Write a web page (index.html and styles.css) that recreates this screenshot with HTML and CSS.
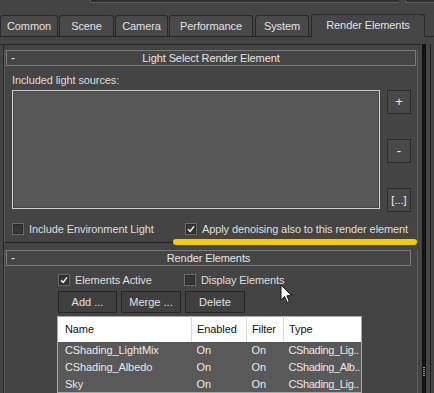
FILE: index.html
```html
<!DOCTYPE html>
<html lang="en">
<head>
  <meta charset="UTF-8">
  <title>Render Setup - Render Elements</title>
  <link rel="stylesheet" href="styles.css">
</head>
<body>
  <div class="topbar">
    <div class="topbox wide"></div>
    <div class="topbox"></div>
  </div>

  <div class="tabs">
    <div class="tab">Common</div>
    <div class="tab">Scene</div>
    <div class="tab">Camera</div>
    <div class="tab">Performance</div>
    <div class="tab">System</div>
    <div class="tab active">Render Elements</div>
  </div>

  <div class="main">
    <div class="panel">
      <div class="rollout first">
        <div class="rollout-head">
          <span class="minus">-</span>
          <span class="title">Light Select Render Element</span>
        </div>
        <div class="rollout-body">
          <div class="caption">Included light sources:</div>
          <div class="lights">
            <div class="light-list"></div>
            <div class="side-buttons">
              <button class="side-btn">+</button>
              <button class="side-btn">-</button>
              <button class="side-btn small">[...]</button>
            </div>
          </div>
          <div class="check-row">
            <label class="check"><span class="box"></span>Include Environment Light</label>
            <label class="check"><span class="box checked"><svg viewBox="0 0 12 12"><path d="M2.5 6.2 L5 8.8 L9.6 2.8" /></svg></span>Apply denoising also to this render element</label>
          </div>
        </div>
      </div>

      <div class="rollout second">
        <div class="rollout-head">
          <span class="minus">-</span>
          <span class="title">Render Elements</span>
        </div>
        <div class="rollout-body">
          <div class="check-row">
            <label class="check"><span class="box checked"><svg viewBox="0 0 12 12"><path d="M2.5 6.2 L5 8.8 L9.6 2.8" /></svg></span>Elements Active</label>
            <label class="check"><span class="box"></span>Display Elements</label>
          </div>
          <div class="actions">
            <button class="btn">Add ...</button>
            <button class="btn">Merge ...</button>
            <button class="btn">Delete</button>
          </div>
          <table class="elements">
            <thead>
              <tr>
                <th class="c-name">Name</th>
                <th class="c-enabled">Enabled</th>
                <th class="c-filter">Filter</th>
                <th class="c-type">Type</th>
              </tr>
            </thead>
            <tbody>
              <tr><td>CShading_LightMix</td><td>On</td><td>On</td><td>CShading_Lig..</td></tr>
              <tr><td>CShading_Albedo</td><td>On</td><td>On</td><td>CShading_Alb..</td></tr>
              <tr><td>Sky</td><td>On</td><td>On</td><td>CShading_Lig..</td></tr>
            </tbody>
          </table>
        </div>
      </div>
    </div>

    <div class="scroll">
      <div class="scroll-track"><span class="grip"></span></div>
      <div class="scroll-edge"></div>
    </div>
  </div>

  <div class="highlight"></div>

  <svg class="cursor" viewBox="0 0 13 20" width="13" height="20">
    <path d="M1 1 L1 16 L4.6 12.6 L7.2 18.4 L9.4 17.4 L6.9 11.8 L11.6 11.6 Z" />
  </svg>
</body>
</html>
```

FILE: styles.css
```css
* {
  box-sizing: border-box;
}

body {
  margin: 0;
  width: 434px;
  height: 393px;
  overflow: hidden;
  position: relative;
  background: #444444;
  color: #dcdcdc;
  font-family: "Liberation Sans", Arial, sans-serif;
  font-size: 11px;
  letter-spacing: -0.1px;
}

/* top strip */
.topbar {
  height: 14px;
  display: flex;
  gap: 6px;
  padding-left: 90px;
}

.topbox {
  height: 3px;
  width: 29px;
  background: #303030;
  border-bottom: 1px solid #5e5e5e;
  border-left: 1px solid #5e5e5e;
}

.topbox.wide {
  width: 309px;
}

/* tabs */
.tabs {
  height: 23px;
  display: flex;
  align-items: flex-end;
  border-bottom: 1px solid #262626;
}

.tab {
  height: 21px;
  margin-right: 1px;
  background: #494949;
  border: 1px solid #2a2a2a;
  border-bottom: none;
  border-radius: 3px 3px 0 0;
  display: flex;
  align-items: center;
  justify-content: center;
  color: #e2e2e2;
  white-space: nowrap;
}

.tab:nth-child(1) { width: 58px; }
.tab:nth-child(2) { width: 55px; }
.tab:nth-child(3) { width: 53px; }
.tab:nth-child(4) { width: 84px; margin-right: 2px; }
.tab:nth-child(5) { width: 54px; margin-right: 2px; }

.tab.active {
  width: 114px;
  height: 23px;
  margin-bottom: -1px;
  background: #454545;
  border-color: #2a2a2a;
  padding-bottom: 2px;
}

/* main area */
.main {
  display: flex;
  margin-top: 7px;
  height: 349px;
}

.panel {
  width: 421px;
  padding-left: 4px;
  border-top: 1px solid #262626;
  position: relative;
}

.panel::before {
  content: "";
  position: absolute;
  left: 3px;
  top: 0;
  bottom: 0;
  width: 1px;
  background: #262626;
}

.rollout {
  width: 414px;
  border-left: 1px solid #5f5f5f;
  border-right: 1px solid #5f5f5f;
}

.rollout.first {
  margin-top: 13px;
  border-bottom: 1px solid #222222;
}

.rollout.second {
  margin-top: 15px;
}

.rollout-head {
  height: 16px;
  margin: -8px 1px 0 1px;
  border: 1px solid #7a7a7a;
  background: #454545;
  display: grid;
  grid-template-columns: 1fr auto 1fr;
  align-items: center;
  color: #e6e6e6;
}

.second .rollout-head {
  margin-right: 6px;
}

.minus {
  padding-left: 4px;
  font-size: 12px;
  line-height: 12px;
}

.rollout-body {
  padding: 0 6px 7px 7px;
}

.caption {
  margin-top: 8px;
  line-height: 13px;
}

.lights {
  display: flex;
  margin-top: 3px;
}

.light-list {
  width: 368px;
  height: 119px;
  background: #575757;
  border: 1px solid #cfcfcf;
  box-shadow: inset 0 0 0 1px #474747;
}

.side-buttons {
  margin-left: 7px;
  display: flex;
  flex-direction: column;
  gap: 25px;
}

.side-btn {
  width: 24px;
  height: 24px;
  padding: 0;
  background: #484848;
  border: 1px solid #2c2c2c;
  color: #eeeeee;
  font-family: "Liberation Sans", Arial, sans-serif;
  font-size: 13px;
  line-height: 20px;
}

.side-btn.small {
  font-size: 11px;
}

.check-row {
  display: grid;
  grid-template-columns: 173px auto;
  margin-top: 10px;
  height: 13px;
  align-items: center;
}

.check {
  display: flex;
  align-items: center;
  gap: 5px;
  white-space: nowrap;
  color: #dedede;
}

.box {
  width: 12px;
  height: 12px;
  flex: none;
  background: #363636;
  border: 1px solid #6a6a6a;
  box-shadow: inset 0 0 0 1px #2a2a2a;
}

.box svg {
  display: block;
  width: 10px;
  height: 10px;
}

.box svg path {
  fill: none;
  stroke: #f2f2f2;
  stroke-width: 1.8;
}

/* second rollout */
.second .rollout-body {
  padding-left: 53px;
}

.second .check-row {
  margin-top: 7px;
  grid-template-columns: 126px auto;
}

.actions {
  display: flex;
  gap: 4px;
  margin-top: 5px;
}

.btn {
  width: 60px;
  height: 22px;
  padding: 0;
  background: #3f3f3f;
  border: 1px solid #262626;
  color: #e2e2e2;
  font-family: "Liberation Sans", Arial, sans-serif;
  font-size: 11px;
}

.btn:first-child {
  width: 59px;
}

.elements {
  margin: 3px 0 0 -1px;
  width: 305px;
  border-collapse: collapse;
  border: 1px solid #a8a8a8;
  table-layout: fixed;
  background: #595959;
}

.elements th {
  height: 25px;
  background: #ffffff;
  color: #111111;
  font-weight: normal;
  text-align: left;
  padding: 0 0 0 5px;
  border-left: 1px solid #d8d8d8;
}

.elements th:first-child {
  border-left: none;
  padding-left: 7px;
}

.c-name { width: 134px; }
.c-enabled { width: 55px; }
.c-filter { width: 37px; }

.elements td {
  height: 17px;
  padding: 0 0 0 5px;
  color: #e8e8e8;
  white-space: nowrap;
}

.elements td:first-child {
  padding-left: 7px;
}

.elements td:last-child {
  letter-spacing: -0.35px;
}

/* scroll column on the right */
.scroll {
  width: 13px;
  display: flex;
  padding-left: 1px;
}

.scroll-track {
  width: 4px;
  background: #121212;
  position: relative;
}

.grip {
  position: absolute;
  left: 1px;
  top: 323px;
  width: 2px;
  height: 10px;
  background: repeating-linear-gradient(#9a9a9a 0 1px, transparent 1px 2px);
}

.scroll-edge {
  width: 1px;
  margin-left: 4px;
  background: #1c1c1c;
}

/* annotation + cursor over content */
.highlight {
  position: absolute;
  left: 173px;
  top: 239px;
  width: 244px;
  height: 6px;
  border-radius: 3px;
  background: #f0cc00;
}

.cursor {
  position: absolute;
  left: 280px;
  top: 284px;
}

.cursor path {
  fill: #ffffff;
  stroke: #111111;
  stroke-width: 1;
}
```
